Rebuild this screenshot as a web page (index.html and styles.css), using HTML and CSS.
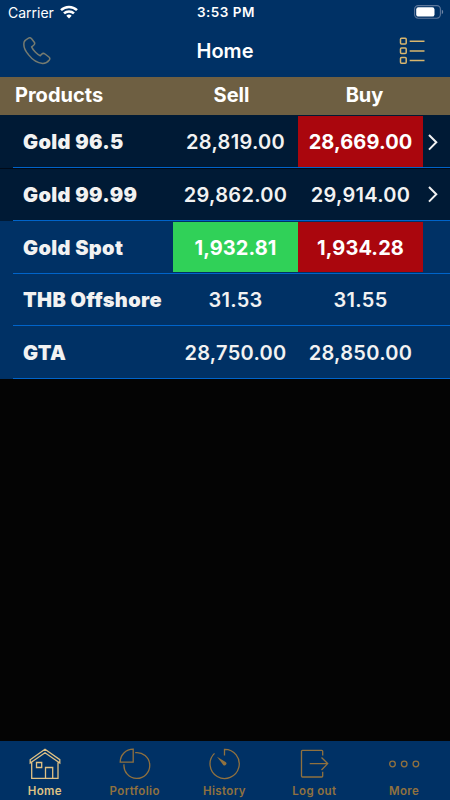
FILE: index.html
```html
<!DOCTYPE html>
<html lang="en">
  <head>
    <meta charset="UTF-8" />
    <meta name="viewport" content="width=device-width, initial-scale=1.0" />
    <title>Home</title>
    <link rel="stylesheet" href="styles.css">
  </head>
  <body>
    <div class="app">
      <div class="statusbar">
        <div class="carrier">
          <span>Carrier</span>
          <svg width="18" height="14" viewBox="0 0 18 14" fill="none" stroke="#fff" stroke-width="2.5">
            <path d="M1 5.2a11.6 11.6 0 0 1 16 0" />
            <path d="M4 8.4a7.2 7.2 0 0 1 10 0" />
            <path d="M6.3 10.7a3.9 3.9 0 0 1 5.4 0L9 13.4z" fill="#fff" stroke="none" />
          </svg>
        </div>
        <div class="time">3:53 PM</div>
        <svg class="battery" width="30" height="14" viewBox="0 0 30 14">
          <rect x="0.6" y="0.6" width="25.8" height="12.6" rx="3.6" fill="none" stroke="#5d779b" stroke-width="1.1" />
          <rect x="2.2" y="2.2" width="18.3" height="9.4" rx="2.2" fill="#fff" />
          <path d="M27.8 4.8q1.4.6 1.4 2.2t-1.4 2.2z" fill="#7187a5" />
        </svg>
      </div>

      <div class="navbar">
        <svg class="phone" width="28" height="28" viewBox="0 0 28 28" fill="none" stroke="#767b70" stroke-width="1.5" stroke-linejoin="round">
          <path d="M1.3 4.6C.2 8 1.700 13.200 5.400 17.600C9.200 22.400 14.600 26.100 19.600 26.500C22.300 26.600 24.500 25.400 26.300 23C27.200 21.700 27 20.900 25.900 20L22 17C20.800 16.100 19.600 16.200 18.600 17.300L17.300 18.800C14.500 17.600 10.200 13.600 8.600 9.900L10.400 8.500C11.900 7.400 12.100 6.500 11.300 5.200L8.600 1.700C7.700.6 6.600.5 5.500 1.100C3.400 2.300 2 3.100 1.300 4.600Z" />
        </svg>
        <h1>Home</h1>
        <svg class="list" width="26" height="28" viewBox="0 0 26 28" fill="none" stroke="#d8b66e" stroke-width="1.500">
          <rect x="1.500" y="1.200" width="5.700" height="5.700" rx="1" />
          <rect x="1.500" y="10.900" width="5.700" height="5.700" rx="1" />
          <rect x="1.500" y="20.600" width="5.700" height="5.700" rx="1" />
          <path d="M10.700 4.200h14.800M10.700 13.900h14.800M10.700 23.600h14.800" />
        </svg>
      </div>

      <div class="heading">
        <span class="h-name">Products</span>
        <span class="h-sell">Sell</span>
        <span class="h-buy">Buy</span>
      </div>

      <div class="prices">
        <div class="row dark first">
          <div class="name">Gold 96.5</div>
          <div class="price">28,819.00</div>
          <div class="price down">28,669.00</div>
          <svg class="arrow" width="12" height="18" viewBox="0 0 12 18"><path d="M2 2l7.300 7.300L2 16.600" /></svg>
        </div>
        <div class="row dark">
          <div class="name">Gold 99.99</div>
          <div class="price">29,862.00</div>
          <div class="price">29,914.00</div>
          <svg class="arrow" width="12" height="18" viewBox="0 0 12 18"><path d="M2 2l7.300 7.300L2 16.600" /></svg>
        </div>
        <div class="row">
          <div class="name">Gold Spot</div>
          <div class="price up">1,932.81</div>
          <div class="price down">1,934.28</div>
        </div>
        <div class="row short">
          <div class="name">THB Offshore</div>
          <div class="price">31.53</div>
          <div class="price">31.55</div>
        </div>
        <div class="row">
          <div class="name">GTA</div>
          <div class="price">28,750.00</div>
          <div class="price">28,850.00</div>
        </div>
      </div>

      <div class="tabbar">
        <div class="tab active">
          <svg width="32" height="32" viewBox="0 0 32 32">
            <path d="M1.200 11.700L16 1.200l14.800 10.500v3.300L16 4.800 1.200 15zM2.700 14.400V30.300h26.300V14.400M16.500 30.300V19.500h7.200v10.800M7.500 14.500h5.200v5H7.500z" />
          </svg>
          <span>Home</span>
        </div>
        <div class="tab">
          <svg width="32" height="32" viewBox="0 0 32 32">
            <path d="M14.200 1.200v13H1.200c0-7.400 5.600-13 13-13zM16.200 4.700A12.900 12.900 0 1 1 5 16.300" />
          </svg>
          <span>Portfolio</span>
        </div>
        <div class="tab">
          <svg width="32" height="32" viewBox="0 0 32 32">
            <path d="M16.500 7.500V1.300A14.600 14.600 0 1 1 6.500 5.400" />
            <path class="solid" d="M9 8.700l8.600 5.200a1.900 1.900 0 1 1-2.900 2.300z" />
          </svg>
          <span>History</span>
        </div>
        <div class="tab">
          <svg width="32" height="32" viewBox="0 0 32 32">
            <path d="M24.700 7.500V3.300Q24.700 2.300 23.700 2.300H4.500Q3.500 2.300 3.500 3.300V28Q3.500 29 4.500 29H23.700Q24.700 29 24.700 28V23.700M11.700 15.600H29.500M23.500 9.500l6.200 6.100-6.200 6.400" />
          </svg>
          <span>Log out</span>
        </div>
        <div class="tab">
          <svg width="32" height="32" viewBox="0 0 32 32">
            <circle cx="4.500" cy="16" r="2.800" />
            <circle cx="16.200" cy="16" r="2.800" />
            <circle cx="27.900" cy="16" r="2.800" />
          </svg>
          <span>More</span>
        </div>
      </div>
    </div>
  </body>
</html>
```

FILE: styles.css
```css
* {
  margin: 0;
  padding: 0;
  box-sizing: border-box;
}

body {
  background: #040404;
  color: #fff;
  font-family: Inter, "Liberation Sans", sans-serif;
}

.app {
  display: flex;
  flex-direction: column;
  width: 450px;
  height: 800px;
}

.statusbar {
  display: grid;
  grid-template-columns: 1fr auto 1fr;
  align-items: center;
  height: 24px;
  padding: 0 6px 0 8px;
  background: #003165;
  font-size: 14px;
}

.carrier {
  display: flex;
  align-items: center;
  gap: 6px;
}

.time {
  font-weight: 600;
  font-size: 13.5px;
  letter-spacing: 0.5px;
}

.battery {
  justify-self: end;
}

.navbar {
  display: flex;
  align-items: center;
  justify-content: space-between;
  height: 53px;
  padding: 0 25px 0 23px;
  background: #003165;
}

h1 {
  font-size: 20px;
  font-weight: 600;
}

.heading {
  display: flex;
  align-items: center;
  height: 38px;
  padding: 0 0 2px 15px;
  background: #6e5f42;
  font-size: 20px;
  font-weight: 700;
}

.h-name {
  width: 150px;
}

.h-sell,
.h-buy {
  width: 133px;
  text-align: center;
}

.prices {
  flex: 1;
}

.row {
  display: flex;
  align-items: center;
  height: 53px;
  padding: 1px 0 2px;
  background: linear-gradient(#0064ca, #0064ca) 13px 100% / 437px 1px no-repeat #003165;
}

.row.dark {
  background-color: #001a35;
}

.row.first {
  padding-bottom: 1px;
}

.row.first + .row {
  box-shadow: inset 0 1px #000a18;
}

.row.short {
  height: 52px;
}

.name {
  width: 173px;
  padding: 1px 0 0 23px;
  color: #f2f2f2;
  font-size: 20px;
  font-weight: 900;
  letter-spacing: 0.35px;
  white-space: nowrap;
}

.price {
  width: 125px;
  height: 100%;
  display: flex;
  align-items: center;
  justify-content: center;
  padding-top: 1px;
  color: #f2f2f2;
  font-size: 20px;
  font-weight: 600;
  letter-spacing: 0.3px;
}

.up,
.down {
  color: #fff;
  font-weight: 700;
  letter-spacing: 0.1px;
}

.up {
  background: #30d158;
}

.down {
  background: #aa060d;
}

.arrow {
  margin-left: 4px;
  fill: none;
  stroke: #f2f2f2;
  stroke-width: 2;
}

.tabbar {
  display: flex;
  height: 59px;
  padding-right: 1px;
  background: #003165;
}

.tab {
  flex: 1;
  display: flex;
  flex-direction: column;
  align-items: center;
  padding-top: 7px;
  gap: 4px;
  color: #90713f;
  font-size: 11.5px;
  line-height: 14px;
  font-weight: 600;
  letter-spacing: 0.35px;
}

.tab svg {
  fill: none;
  stroke: currentColor;
  stroke-width: 1.3;
}

.tab .solid {
  fill: currentColor;
  stroke: none;
}

.tab.active {
  color: #dfc184;
}
```
